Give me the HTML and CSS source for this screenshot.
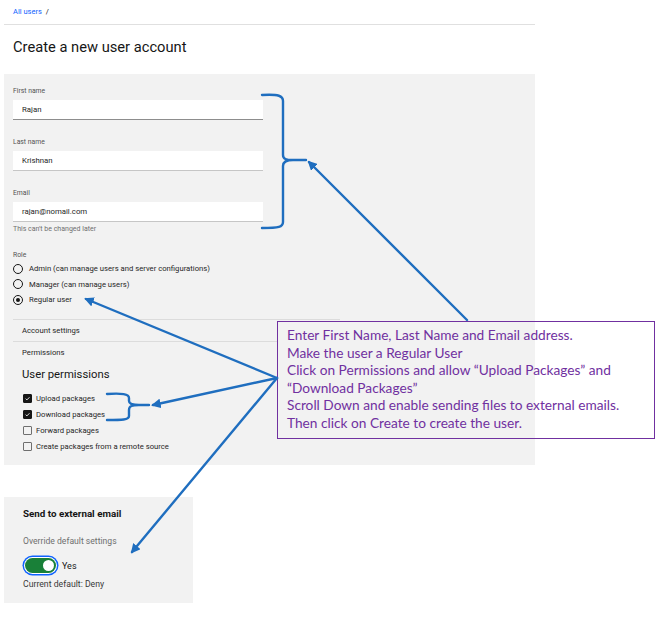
FILE: index.html
```html
<!DOCTYPE html>
<html lang="en">
<head>
<meta charset="utf-8">
<title>Create a new user account</title>
<link rel="stylesheet" href="styles.css">
</head>
<body>
<div class="page">
  <nav class="breadcrumb"><a class="crumb-link">All users</a><span class="crumb-sep">/</span></nav>
  <h1 class="title">Create a new user account</h1>

  <section class="panel">
    <div class="field">
      <div class="field-label">First name</div>
      <div class="input input-active">Rajan</div>
    </div>
    <div class="field">
      <div class="field-label">Last name</div>
      <div class="input">Krishnan</div>
    </div>
    <div class="field">
      <div class="field-label">Email</div>
      <div class="input">rajan@nomail.com</div>
      <div class="helper">This can't be changed later</div>
    </div>

    <div class="role">
      <div class="field-label">Role</div>
      <div class="radio-row"><span class="radio"></span>Admin (can manage users and server configurations)</div>
      <div class="radio-row"><span class="radio"></span>Manager (can manage users)</div>
      <div class="radio-row"><span class="radio radio-on"></span>Regular user</div>
    </div>

    <div class="accordion">
      <div class="acc-item">Account settings</div>
      <div class="acc-item">Permissions</div>
      <div class="acc-body">
        <h2 class="perm-title">User permissions</h2>
        <div class="check-row"><span class="check check-on"><svg viewBox="0 0 10 10" width="9" height="9"><path d="M2.3 5.2 L4.2 7 L7.8 3.2" fill="none" stroke="#fff" stroke-width="1.2"/></svg></span>Upload packages</div>
        <div class="check-row"><span class="check check-on"><svg viewBox="0 0 10 10" width="9" height="9"><path d="M2.3 5.2 L4.2 7 L7.8 3.2" fill="none" stroke="#fff" stroke-width="1.2"/></svg></span>Download packages</div>
        <div class="check-row"><span class="check"></span>Forward packages</div>
        <div class="check-row"><span class="check"></span>Create packages from a remote source</div>
      </div>
    </div>
  </section>

  <section class="panel2">
    <h3 class="ext-title">Send to external email</h3>
    <div class="ext-sub">Override default settings</div>
    <div class="toggle-row"><span class="toggle"><span class="knob"></span></span><span class="toggle-text">Yes</span></div>
    <div class="ext-default">Current default: Deny</div>
  </section>
</div>

<div class="note">
  <div>Enter First Name, Last Name and Email address.</div>
  <div>Make the user a Regular User</div>
  <div>Click on Permissions and allow “Upload Packages” and</div>
  <div>“Download Packages”</div>
  <div>Scroll Down and enable sending files to external emails.</div>
  <div>Then click on Create to create the user.</div>
</div>

<svg class="arrows" width="668" height="619" viewBox="0 0 668 619">
  <defs>
    <marker id="ah" viewBox="0 0 10 10" refX="8" refY="5" markerWidth="4" markerHeight="4" orient="auto-start-reverse">
      <path d="M0,0 L10,5 L0,10 z" fill="#1f6ebf"/>
    </marker>
  </defs>
  <g fill="none" stroke="#1f6ebf" stroke-width="2.4" stroke-linecap="round">
    <path d="M262,95 C279,94 283,96 283,101 L283,155 C283,159 286,160 293,160 L306,160 M293,160 C286,160 283,162 283,166 L283,222 C283,227 279,228 262,228"/>
    <path d="M107,394 C122,393 129,394 129,398 L129,401 C129,404 132,405 139,405 L149,405 M139,405 C132,405 129,406 129,410 L129,416 C129,420 122,420 107,420"/>
    <line x1="467" y1="320" x2="309" y2="162" marker-end="url(#ah)"/>
    <line x1="277" y1="378" x2="86" y2="299" marker-end="url(#ah)"/>
    <line x1="277" y1="378" x2="153" y2="405" marker-end="url(#ah)"/>
    <line x1="277" y1="378" x2="132" y2="552" marker-end="url(#ah)"/>
  </g>
</svg>
</body>
</html>
```

FILE: styles.css
```css
* { box-sizing: border-box; }

html, body {
  margin: 0;
  padding: 0;
  background: #ffffff;
}

body {
  font-family: Roboto, "Noto Sans", "Liberation Sans", sans-serif;
  color: #161616;
  position: relative;
  width: 668px;
  height: 619px;
  overflow: hidden;
}

.page {
  padding-left: 4px;
  width: 535px;
}

.breadcrumb {
  height: 25px;
  border-bottom: 1px solid #e0e0e0;
  display: flex;
  align-items: center;
  gap: 4px;
  padding-left: 9px;
  padding-bottom: 2px;
  font-size: 7.5px;
}

.crumb-link {
  color: #0f62fe;
}

.crumb-sep {
  color: #161616;
}

.title {
  margin: 0;
  padding: 13px 0 17px 9px;
  font-size: 14.7px;
  line-height: 19px;
  font-weight: 400;
  color: #161616;
}

.panel {
  background: #f2f2f2;
  height: 391px;
  padding: 12px 9px 0 9px;
}

.field + .field {
  margin-top: 17px;
}

.field-label {
  font-size: 6.8px;
  line-height: 10px;
  color: #525252;
  margin-bottom: 4px;
}

.input {
  width: 250px;
  height: 20px;
  background: #ffffff;
  border-bottom: 1px solid #c6c6c6;
  padding-left: 9px;
  font-size: 7.8px;
  line-height: 20px;
  color: #262626;
}

.input-active {
  border-bottom-color: #8d8d8d;
}

.helper {
  font-size: 7px;
  line-height: 10px;
  margin-top: 2px;
  color: #6f6f6f;
}

.role {
  margin-top: 16px;
}

.role .field-label {
  margin-bottom: 1px;
}

.radio-row {
  height: 15.5px;
  display: flex;
  align-items: center;
  gap: 6px;
  font-size: 7.7px;
  color: #262626;
}

.radio {
  width: 10px;
  height: 10px;
  border: 1px solid #161616;
  border-radius: 50%;
  display: flex;
  align-items: center;
  justify-content: center;
  flex: none;
}

.radio-on::after {
  content: "";
  width: 4px;
  height: 4px;
  border-radius: 50%;
  background: #161616;
}

.accordion {
  margin-top: 11px;
  width: 327px;
}

.acc-item {
  border-top: 1px solid #dcdcdc;
  height: 22px;
  padding-left: 9px;
  display: flex;
  align-items: center;
  font-size: 7.7px;
  color: #262626;
}

.acc-body {
  padding-left: 9px;
}

.perm-title {
  margin: 5px 0 0 0;
  font-size: 11.3px;
  line-height: 14px;
  font-weight: 400;
  color: #161616;
}

.check-row {
  margin-left: 1px;
  height: 16px;
  display: flex;
  align-items: center;
  gap: 4px;
  font-size: 7.7px;
  color: #262626;
}

.perm-title + .check-row {
  margin-top: 9px;
}

.check {
  width: 9px;
  height: 9px;
  border: 1px solid #6f6f6f;
  border-radius: 1px;
  flex: none;
  display: flex;
  align-items: center;
  justify-content: center;
}

.check-on {
  background: #161616;
  border-color: #161616;
}

.check-on svg {
  display: block;
}

.panel2 {
  margin-top: 32px;
  width: 189px;
  height: 106px;
  background: #f2f2f2;
  padding: 11px 0 0 19px;
}

.ext-title {
  margin: 0;
  font-size: 9.8px;
  line-height: 12px;
  font-weight: 700;
  color: #161616;
}

.ext-sub {
  margin-top: 15px;
  font-size: 8.6px;
  line-height: 12px;
  color: #6f6f6f;
}

.toggle-row {
  margin-top: 9px;
  height: 19px;
  display: flex;
  align-items: center;
  gap: 6px;
  padding-left: 1px;
}

.toggle {
  width: 31px;
  height: 15px;
  border-radius: 8px;
  background: #198038;
  box-shadow: 0 0 0 1px #ffffff, 0 0 0 2.5px #0f62fe;
  display: flex;
  align-items: center;
  justify-content: flex-end;
  padding-right: 2px;
  margin-left: 1px;
}

.knob {
  width: 11px;
  height: 11px;
  border-radius: 50%;
  background: #ffffff;
}

.toggle-text {
  font-size: 9px;
  color: #161616;
}

.ext-default {
  margin-top: 3px;
  font-size: 8.7px;
  line-height: 12px;
  color: #393939;
}

.note {
  position: absolute;
  left: 277px;
  top: 321px;
  width: 378px;
  height: 118px;
  border: 1px solid #7030a0;
  background: linear-gradient(to right, #f2f2f2 257px, #ffffff 257px);
  color: #7030a0;
  font-family: Lato, "Open Sans", sans-serif;
  font-size: 13.7px;
  line-height: 17.6px;
  padding: 4px 0 0 9px;
  white-space: nowrap;
}

.arrows {
  position: absolute;
  left: 0;
  top: 0;
  pointer-events: none;
}
```
